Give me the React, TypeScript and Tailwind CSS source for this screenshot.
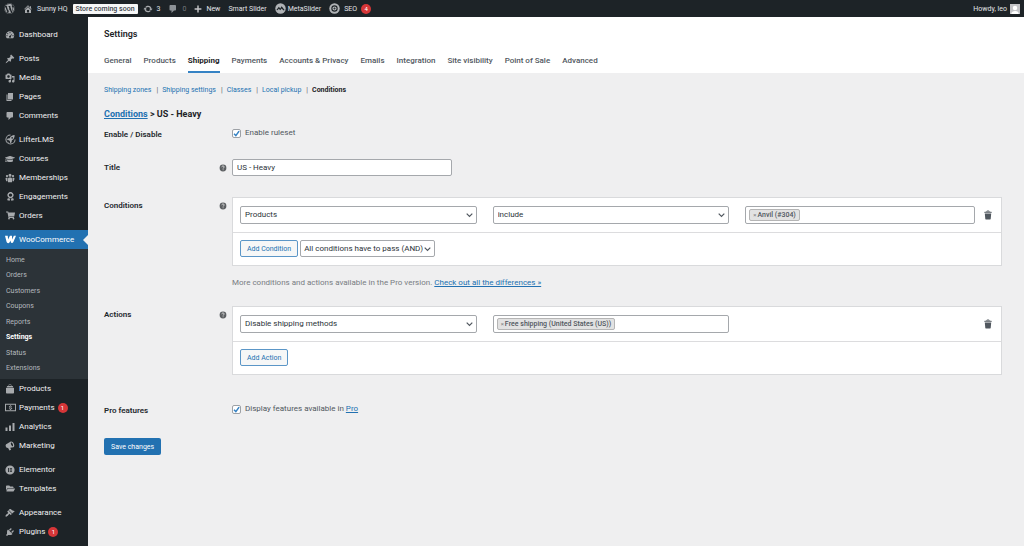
import type { ReactNode } from 'react';
import { FaWordpress, FaGraduationCap, FaShoppingCart, FaFolderOpen, FaAward } from 'react-icons/fa';

const paths = {
  dashboard:
    'M3.76 16.5h12.48A8.6 8.6 0 0 0 18.5 11 8.5 8.5 0 0 0 1.500 11c0 2.100.9 4.100 2.260 5.500zM10 4.200a1.100 1.100 0 1 1 0 2.200 1.100 1.100 0 0 1 0-2.200zM5.500 6.200a1.100 1.100 0 1 1 0 2.200 1.100 1.100 0 0 1 0-2.200zm9.300.1-3 6.200a2 2 0 1 1-1.600-1.100zM4 10.200a1.100 1.100 0 1 1 0 2.200 1.100 1.100 0 0 1 0-2.200zm12 0a1.100 1.100 0 1 1 0 2.200 1.100 1.100 0 0 1 0-2.200z',
  pin: 'M10.44 3.02l1.82-1.82 6.36 6.35-1.83 1.82c-1.05-.68-2.48-.57-3.41.36l-.75.75c-.92.93-1.04 2.35-.35 3.41l-1.83 1.82-2.41-2.41-2.8 2.79c-.42.42-3.38 2.71-3.8 2.29s1.86-3.39 2.28-3.81l2.79-2.79L4.1 9.36l1.83-1.82c1.05.69 2.48.57 3.4-.36l.75-.75c.93-.92 1.05-2.35.36-3.41z',
  media:
    'M13 11V4c0-.55-.45-1-1-1h-1.67L9 1H5L3.67 3H2c-.55 0-1 .45-1 1v7c0 .55.45 1 1 1h10c.55 0 1-.45 1-1zM7 4.5c1.38 0 2.5 1.12 2.5 2.5S8.38 9.5 7 9.5 4.5 8.38 4.5 7 5.62 4.5 7 4.5zM14 6h5v10.5c0 1.38-1.12 2.5-2.5 2.5S14 17.88 14 16.5s1.12-2.5 2.5-2.5c.17 0 .34.02.5.05V9h-3V6zm-4 8.05V13h2v3.5c0 1.38-1.12 2.5-2.5 2.5S7 17.88 7 16.5 8.12 14 9.5 14c.17 0 .34.02.5.05z',
  page: 'M6 15V2h10v13H6zm-1 1h8v2H3V5h2v11z',
  comment: 'M5 2h9c1.1 0 2 .9 2 2v7c0 1.1-.9 2-2 2h-2l-5 5v-5H5c-1.1 0-2-.9-2-2V4c0-1.1.9-2 2-2z',
  brush:
    'M14.48 11.06L7.41 3.99l1.5-1.5c.5-.56 2.3-.47 3.51.32 1.21.8 1.43 1.28 2.91 2.1 1.18.64 2.45 1.26 4.45.85zm-.71.71L6.7 4.7 4.93 6.47c-.39.39-.39 1.02 0 1.41l1.06 1.06c.39.39.39 1.03 0 1.42-.6.6-1.43 1.11-2.21 1.69-.35.26-.7.53-1.01.84C1.43 14.23.4 16.08 1.4 17.07c.99 1 2.84-.03 4.18-1.36.31-.31.58-.66.85-1.02.57-.78 1.08-1.61 1.69-2.21.39-.39 1.02-.39 1.41 0l1.06 1.06c.39.39 1.02.39 1.41 0z',
  plug: 'M13.11 4.36L9.87 7.6 8 5.73l3.24-3.24c.35-.34 1.05-.2 1.56.32.52.51.66 1.21.31 1.55zm-8 1.77l.91-1.12 9.01 9.01-1.19.84c-.71.71-2.63 1.16-3.82 1.16H6.14L4.9 17.26c-.59.59-1.54.59-2.12 0-.59-.58-.59-1.53 0-2.12l1.24-1.24v-3.88c0-1.13.4-3.19 1.09-3.89zm7.26 3.97l3.24-3.24c.34-.35 1.04-.21 1.55.31.52.51.66 1.21.31 1.55l-3.24 3.25z',
  home: 'M16 8.5l1.53 1.53-1.06 1.06L10 4.6l-6.47 6.49-1.06-1.06L10 2.5l4 4v-2h2v4zm-6-2.46l6 5.99V18H4v-5.97zM12 17v-5H8v5h4z',
  update:
    'M10.2 3.28c3.53 0 6.43 2.61 6.92 6h2.08l-3.5 4-3.5-4h2.32c-.45-1.97-2.21-3.45-4.32-3.45-1.45 0-2.73.71-3.54 1.78L4.95 5.66C6.23 4.2 8.11 3.28 10.2 3.28zm-.4 13.44c-3.52 0-6.43-2.61-6.92-6H.8l3.5-4c1.17 1.33 2.33 2.67 3.5 4H5.48c.45 1.97 2.21 3.45 4.32 3.45 1.45 0 2.73-.71 3.54-1.78l1.71 1.95c-1.28 1.46-3.15 2.38-5.25 2.38z',
  trash:
    'M13.200 3.300h3.300c.6 0 1 .4 1 1v1.400h-15V4.300c0-.6.5-1 1-1h3.300C7.100 2 8.400 1.200 10 1.200s2.900.8 3.200 2.100zm-4.800 0h3.200c-.3-.5-.9-.8-1.600-.8s-1.300.3-1.600.8zM3.600 6.800h12.800l-1 11.200c0 .6-.5 1-1.100 1H5.700c-.6 0-1.100-.4-1.100-1z',
  plus: 'M18.500 8.200v3.600h-6.700v6.700H8.200v-6.700H1.500V8.200h6.700V1.500h3.600v6.700z',
  lifter:
    'M10 .8a9.200 9.200 0 1 0 9.200 9.200h-1.800A7.400 7.400 0 1 1 10 2.600zM17.500 1.800c-4.500.2-7.500 2.200-9 5.700L5 8.200 3.500 11l3.600.2 1.700 1.700.4 3.900 2.700-1.700.6-3.600c3.500-1.700 5.200-4.700 5-9.700zM13 5.600a1.500 1.500 0 1 1 0 3 1.500 1.500 0 0 1 0-3zM4.500 13.500 7 15.800l-3 1z',
  group:
    'M10 1.500a3 3 0 1 1 0 6 3 3 0 0 1 0-6zM4 3.800a2.300 2.300 0 1 1 0 4.600 2.300 2.300 0 0 1 0-4.600zm12 0a2.300 2.300 0 1 1 0 4.600 2.300 2.300 0 0 1 0-4.600zM6 11c0-3 8-3 8 0v7.500H6zm-1 5.500H2.500L1 11.500C1 9.500 3 9 5 9.500zm10 0h2.500l1.500-5c0-2-2-2.500-4-2z',
  bag: 'M2 8h16v9.500c0 .8-.7 1.500-1.500 1.500h-13C2.700 19 2 18.300 2 17.500zM3 6.800 4.500 4h11L17 6.800zM6 3c.6-3 7.400-3 8 0h-2c-.6-1.200-3.400-1.200-4 0z',
  money:
    'M0 3h20v14H0zm1.800 1.800v10.400h16.400V4.800zM9.300 5.700h1.500v1c1 .2 1.700.7 2 1.400l-1.400.7c-.5-1-2.800-.8-2.700.2 0 1 4.400.3 4.400 2.500 0 1.100-.9 1.700-2.300 1.900v1H9.300v-1c-1.200-.2-2-.7-2.300-1.700l1.500-.5c.3 1.200 3 1.100 3 .2C11.500 10.300 7.100 11 7.100 9c0-1.200.9-2 2.200-2.200z',
  bars: 'M1 11h4v7H1zM8 7h4v11H8zM15 2h4v16h-4z',
  megaphone:
    'M1.500 10.500c-.8-2 .2-4 1.700-4.600L11.500 1c2-.8 4.700 1.200 6.200 4.300 1.400 3.200 1.100 6.400-.8 7.200l-6.400.8 1.600 4.200-3.200 1.500-3-5.300-1.200.1c-1.300 0-2.500-1.300-3.200-3.300zM12.300 3c-.9.500-.8 2.400 0 4.400.9 2 2.300 3.300 3.200 3 .8-.5.8-2.400 0-4.400-.9-2-2.300-3.400-3.200-3z',
  elementor: 'M10 .8a9.200 9.200 0 1 0 0 18.400A9.200 9.200 0 0 0 10 .8zM6.200 6h1.700v8H6.200zm3.300 0h4.600v1.600H9.500zm0 3.200h4.600v1.600H9.500zm0 3.200h4.600V14H9.500z',
  woo: 'M0 3h5l.6 6.800L9 3h3.600l.5 6.800L16 3h4l-4.800 11.500c-1 2.700-4.200 2.700-4.700 0L10 11.600l-1.600 3.200c-1.400 2.700-4.900 2.200-5.600-.5z',
};

function Icon({ name, className = 'size-[10px]' }: { name: keyof typeof paths; className?: string }) {
  return (
    <svg viewBox="0 0 20 20" className={`shrink-0 ${className}`} fill="currentColor" fillRule="evenodd" aria-hidden="true">
      <path d={paths[name]} />
    </svg>
  );
}

function Count({ children }: { children: ReactNode }) {
  return (
    <span className="flex size-[10px] shrink-0 items-center justify-center rounded-full bg-[#d63638] text-[6px] leading-none text-white">
      {children}
    </span>
  );
}

function AdminBar() {
  const link = 'flex items-center gap-1';
  return (
    <header className="flex h-[17px] shrink-0 items-center justify-between bg-[#1d2327] pr-1 pl-1 text-[7px] text-[#e2e4e7]">
      <nav className="flex items-center" aria-label="Toolbar">
        <a href="#wp" aria-label="About WordPress" className="mr-2 text-[#a7aaad]"><FaWordpress className="size-[11px]" /></a>
        <a href="#site" className={`${link} mr-[5px]`}><Icon name="home" className="size-[10px] text-[#a7aaad]" />Sunny HQ</a>
        <a href="#soon" className="mr-[5px] rounded-[1px] bg-[#f6f7f7] px-[3px] py-px leading-[8px] font-medium text-[#3c434a]">Store coming soon</a>
        <a href="#updates" className={`${link} mr-2`}><Icon name="update" className="size-[10px] text-[#a7aaad]" />3</a>
        <a href="#comments" className={`${link} mr-2 text-[#74797e]`}><Icon name="comment" className="size-[10px] text-[#8c9196]" />0</a>
        <a href="#new" className={`${link} mr-2`}><Icon name="plus" className="size-[8px] text-[#c3c4c7]" />New</a>
        <a href="#slider" className="mr-2">Smart Slider</a>
        <a href="#meta" className="mr-2 flex items-center gap-[2px]">
          <svg viewBox="0 0 20 20" className="size-[11px]" aria-hidden="true">
            <circle cx="10" cy="10" r="9.500" fill="#b0b3b6" />
            <path d="M2.500 12.500 7 7l2.500 3 2.500-4 5.500 6.500-2 1-3.500-3.500-2.500 3-2.500-2.500-2.500 2.500z" fill="#1d2327" />
          </svg>
          MetaSlider
        </a>
        <a href="#seo" className="flex items-center gap-1">
          <svg viewBox="0 0 20 20" className="size-[11px]" aria-hidden="true">
            <circle cx="10" cy="10" r="9.500" fill="#b0b3b6" />
            <circle cx="10" cy="10" r="4.800" fill="none" stroke="#1d2327" strokeWidth="2" />
            <path d="M10 8v4M8 10h4" stroke="#1d2327" strokeWidth="1.200" />
          </svg>
          SEO
          <Count>4</Count>
        </a>
      </nav>
      <a href="#profile" className="flex items-center gap-[3px]">
        Howdy, leo
        <svg viewBox="0 0 20 20" className="size-[10px]" aria-hidden="true">
          <rect width="20" height="20" fill="#c3c4c7" />
          <circle cx="10" cy="8" r="4.500" fill="#fff" />
          <path d="M2.500 20c0-8 15-8 15 0z" fill="#fff" />
        </svg>
      </a>
    </header>
  );
}

type Item = { label: string; icon: ReactNode; count?: number };
const groups: Item[][] = [
  [{ label: 'Dashboard', icon: <Icon name="dashboard" /> }],
  [
    { label: 'Posts', icon: <Icon name="pin" /> },
    { label: 'Media', icon: <Icon name="media" /> },
    { label: 'Pages', icon: <Icon name="page" /> },
    { label: 'Comments', icon: <Icon name="comment" /> },
  ],
  [
    { label: 'LifterLMS', icon: <Icon name="lifter" className="size-[11px]" /> },
    { label: 'Courses', icon: <FaGraduationCap className="size-[10px]" /> },
    { label: 'Memberships', icon: <Icon name="group" /> },
    { label: 'Engagements', icon: <FaAward className="size-[9px]" /> },
    { label: 'Orders', icon: <FaShoppingCart className="size-[9px]" /> },
  ],
];
const lowerGroups: Item[][] = [
  [
    { label: 'Products', icon: <Icon name="bag" /> },
    { label: 'Payments', icon: <Icon name="money" className="size-[11px]" />, count: 1 },
    { label: 'Analytics', icon: <Icon name="bars" /> },
    { label: 'Marketing', icon: <Icon name="megaphone" /> },
  ],
  [
    { label: 'Elementor', icon: <Icon name="elementor" /> },
    { label: 'Templates', icon: <FaFolderOpen className="size-[9px]" /> },
  ],
  [
    { label: 'Appearance', icon: <Icon name="brush" /> },
    { label: 'Plugins', icon: <Icon name="plug" />, count: 1 },
  ],
];
const submenu = ['Home', 'Orders', 'Customers', 'Coupons', 'Reports', 'Settings', 'Status', 'Extensions'];

function MenuGroup({ items }: { items: Item[] }) {
  return (
    <ul>
      {items.map((item) => (
        <li key={item.label}>
          <a href={`#${item.label}`} className="flex h-[19px] items-center gap-[3px] pl-1">
            <span className="flex w-[12px] justify-center text-[#a7aaad]">{item.icon}</span>
            {item.label}
            {item.count && <Count>{item.count}</Count>}
          </a>
        </li>
      ))}
    </ul>
  );
}

function Sidebar() {
  return (
    <nav aria-label="Main menu" className="w-[88px] shrink-0 bg-[#1d2327] pt-2 text-[8px] text-[#f0f0f1]">
      <div className="flex flex-col gap-[5px]">
        {groups.map((g) => <MenuGroup key={g[0].label} items={g} />)}
        <div>
          <a href="#woocommerce" className="relative flex h-[19px] items-center gap-[3px] bg-[#2271b1] pl-1 text-white">
            <span className="flex w-[12px] justify-center"><Icon name="woo" className="size-[11px]" /></span>
            WooCommerce
            <span className="absolute top-[5px] right-0 border-y-[5px] border-r-[5px] border-y-transparent border-r-[#efeff0]" />
          </a>
          <ul className="grid h-[130px] auto-rows-fr bg-[#2c3338] py-[3px] text-[7px] text-[#b4b9be]">
            {submenu.map((s) => (
              <li key={s} className="flex items-center pl-[6px]">
                <a href={`#${s}`} className={s === 'Settings' ? 'font-bold text-white' : ''}>{s}</a>
              </li>
            ))}
          </ul>
          <MenuGroup items={lowerGroups[0]} />
        </div>
        {lowerGroups.slice(1).map((g) => <MenuGroup key={g[0].label} items={g} />)}
      </div>
    </nav>
  );
}

const tabs = ['General', 'Products', 'Shipping', 'Payments', 'Accounts & Privacy', 'Emails', 'Integration', 'Site visibility', 'Point of Sale', 'Advanced'];
const sections = ['Shipping zones', 'Shipping settings', 'Classes', 'Local pickup', 'Conditions'];

function Row({ label, htmlFor, help, className, children }: { label: string; htmlFor: string; help?: boolean; className: string; children: ReactNode }) {
  return (
    <div className={`grid grid-cols-[128px_minmax(0,1fr)] ${className}`}>
      <div className="flex h-[17px] items-center justify-between pr-[5px]">
        <label htmlFor={htmlFor} className="font-semibold text-[#23282d]">{label}</label>
        {help && (
          <svg viewBox="0 0 20 20" className="size-[8px]" role="img" aria-label="Help">
            <circle cx="10" cy="10" r="8.500" fill="#5c5f62" />
            <path d="M7 8c0-4 6-4 6-.5 0 2-2.700 2-2.700 4M10.300 13.500v2" stroke="#efeff0" strokeWidth="2" fill="none" />
          </svg>
        )}
      </div>
      <div>{children}</div>
    </div>
  );
}

function Select({ id, label, value, compact }: { id: string; label: string; value: string; compact?: boolean }) {
  return (
    <div className="relative">
      <select
        id={id}
        aria-label={label}
        className={`block appearance-none rounded-[2px] border border-[#a5a8ac] bg-white text-[#2c3338] ${compact ? 'h-[17px] pr-[11px] pl-[3px]' : 'h-[18px] w-full pr-4 pl-1'}`}
      >
        <option>{value}</option>
      </select>
      <svg viewBox="0 0 10 10" className="pointer-events-none absolute top-1/2 right-1 size-[7px] -translate-y-1/2" fill="none" stroke="#50575e" strokeWidth="1.700" aria-hidden="true">
        <path d="M1 3l4 4 4-4" />
      </svg>
    </div>
  );
}

function TagBox({ value }: { value: string }) {
  return (
    <div className="flex h-[18px] items-center rounded-[2px] border border-[#a5a8ac] bg-white px-[3px]">
      <span className="flex h-[12px] items-center gap-px rounded-[2px] border border-[#b5b5b5] bg-[#e2e2e2] px-[3px] text-[7px] font-medium text-[#50575e]">
        <button type="button" aria-label={`Remove ${value}`} className="text-[6px] text-[#888]">×</button>
        {value}
      </span>
    </div>
  );
}

function RuleRow({ name, children }: { name: string; children: ReactNode }) {
  return (
    <div className="flex items-center gap-2 border-b border-[#dcdcde] py-2 pr-2 pl-[7px]">
      <div className="grid flex-1 grid-cols-[237fr_237fr_230fr] gap-x-4">{children}</div>
      <button type="button" aria-label={`Delete ${name}`} className="text-[#50575e]">
        <Icon name="trash" />
      </button>
    </div>
  );
}

function Check({ id, children }: { id: string; children: ReactNode }) {
  return (
    <div className="flex h-[14px] items-center gap-1">
      <span className="relative flex size-[9px]">
        <input id={id} type="checkbox" defaultChecked className="peer size-[9px] appearance-none rounded-[2px] border border-[#9da1a6] bg-white" />
        <svg viewBox="0 0 10 10" className="pointer-events-none absolute inset-0 hidden size-[9px] peer-checked:block" fill="none" stroke="#3582c4" strokeWidth="1.700" aria-hidden="true">
          <path d="M2.300 5.200l2 2.200 3.600-5" />
        </svg>
      </span>
      <label htmlFor={id}>{children}</label>
    </div>
  );
}

const panel = 'border border-[#d9dadc] bg-white';
const outline = 'h-[17px] rounded-[2px] border border-[#5b96c7] bg-[#f6f7f7] px-[6px] text-[7px] text-[#2271b1]';
const linkBlue = 'text-[#2271b1] underline';

export default function App() {
  return (
    <div className="flex min-h-screen flex-col bg-[#efeff0] font-['Roboto',sans-serif] text-[8px] leading-[12px] text-[#50575e]">
      <AdminBar />
      <div className="flex flex-1">
        <Sidebar />
        <main className="min-w-0 flex-1">
          <div className="bg-white px-4 pt-[11px]">
            <h1 className="text-[9px] font-semibold text-[#1d2327]">Settings</h1>
            <nav aria-label="Settings tabs" className="mt-[15px] flex gap-3 font-medium">
              {tabs.map((t) => (
                <a
                  key={t}
                  href={`#${t}`}
                  className={`border-b-2 pb-1 ${t === 'Shipping' ? 'border-[#3582c4] font-bold text-[#1d2327]' : 'border-transparent'}`}
                >
                  {t}
                </a>
              ))}
            </nav>
          </div>
          <form className="pr-[22px] pl-4" onSubmit={(e) => e.preventDefault()}>
            <ul className="flex pt-[11px] text-[7px]">
              {sections.map((s, i) => (
                <li key={s}>
                  {i > 0 && <span className="pr-1 pl-[5px]">|</span>}
                  <a href={`#${s}`} className={s === 'Conditions' ? 'font-bold text-[#1d2327]' : 'text-[#2271b1]'}>{s}</a>
                </li>
              ))}
            </ul>
            <h2 className="mt-3 text-[9px] font-bold text-[#1d2327]">
              <a href="#conditions" className={linkBlue}>Conditions</a> &gt; US - Heavy
            </h2>
            <Row label="Enable / Disable" htmlFor="enabled" className="mt-[6px]">
              <Check id="enabled">Enable ruleset</Check>
            </Row>
            <Row label="Title" htmlFor="title" help className="mt-4">
              <input id="title" defaultValue="US - Heavy" className="block h-[17px] w-[220px] rounded-[2px] border border-[#a5a8ac] bg-white px-1 text-[#2c3338]" />
            </Row>
            <Row label="Conditions" htmlFor="condition" help className="mt-[21px]">
              <div className={panel}>
                <RuleRow name="condition">
                  <Select id="condition" label="Condition" value="Products" />
                  <Select id="operator" label="Operator" value="include" />
                  <TagBox value="Anvil (#304)" />
                </RuleRow>
                <div className="flex items-center gap-[2px] pt-[7px] pb-2 pl-[7px]">
                  <button type="button" className={outline}>Add Condition</button>
                  <Select id="mode" label="Condition mode" value="All conditions have to pass (AND)" compact />
                </div>
              </div>
              <p className="mt-[11px] text-[#787c82]">
                More conditions and actions available in the Pro version. <a href="#pro" className={linkBlue}>Check out all the differences »</a>
              </p>
            </Row>
            <Row label="Actions" htmlFor="action" help className="mt-[17px]">
              <div className={panel}>
                <RuleRow name="action">
                  <Select id="action" label="Action" value="Disable shipping methods" />
                  <TagBox value="Free shipping (United States (US))" />
                </RuleRow>
                <div className="flex pt-[7px] pb-2 pl-[7px]">
                  <button type="button" className={outline}>Add Action</button>
                </div>
              </div>
            </Row>
            <Row label="Pro features" htmlFor="pro" className="mt-[27px]">
              <Check id="pro">
                Display features available in <a href="#pro" className={linkBlue}>Pro</a>
              </Check>
            </Row>
            <button type="submit" className="mt-[19px] h-[17px] rounded-[2px] bg-[#2271b1] px-[7px] text-[7px] text-white">Save changes</button>
          </form>
        </main>
      </div>
    </div>
  );
}
